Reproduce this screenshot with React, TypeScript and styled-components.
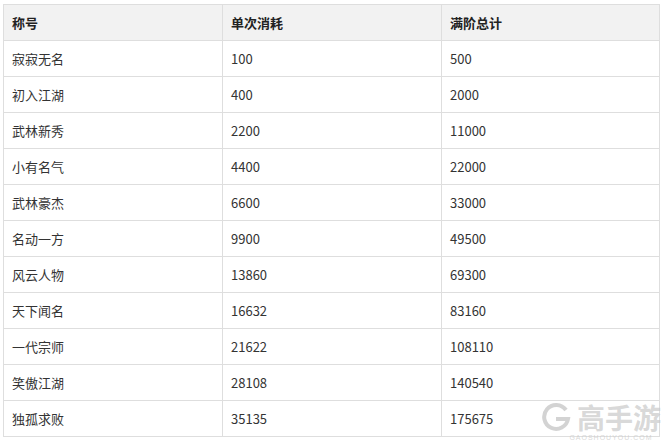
import React from "react";
import styled, { createGlobalStyle } from "styled-components";

const Global = createGlobalStyle`
  body { margin: 0; background: #fff; font-family: "Microsoft YaHei", "Noto Sans CJK SC", sans-serif; }
`;

const Wrap = styled.div`
  position: relative;
  width: 665px;
  height: 445px;
  padding: 4px 5px 0 3px;
  box-sizing: border-box;
  overflow: hidden;
`;

const Table = styled.table`
  width: 657px;
  border-collapse: collapse;
  font-size: 13px;
  color: #333;
  td, th { border: 1px solid #dedede; height: 36px; padding: 0 0 0 8px; text-align: left; box-sizing: border-box; }
  th { background: #f2f2f2; font-weight: bold; color: #222; }
  col:nth-child(1) { width: 219px; }
  col:nth-child(2) { width: 219px; }
`;

const Mark = styled.div`
  position: absolute;
  right: 4px;
  bottom: 3px;
  color: rgba(200, 200, 200, 0.7);
  text-align: center;
  line-height: 1;
  display: flex;
  flex-direction: column;
  gap: 2px;
`;
const MarkTop = styled.div`
  font-size: 28px;
  font-weight: bold;
  display: flex;
  align-items: center;
  gap: 6px;
  line-height: 30px;
`;
const MarkSub = styled.div`
  font-size: 7px;
  line-height: 8px;
  font-family: "Liberation Sans", sans-serif;
  letter-spacing: 1px;
  padding-left: 20px;
`;

const rows: [string, string, string][] = [
  ["寂寂无名", "100", "500"],
  ["初入江湖", "400", "2000"],
  ["武林新秀", "2200", "11000"],
  ["小有名气", "4400", "22000"],
  ["武林豪杰", "6600", "33000"],
  ["名动一方", "9900", "49500"],
  ["风云人物", "13860", "69300"],
  ["天下闻名", "16632", "83160"],
  ["一代宗师", "21622", "108110"],
  ["笑傲江湖", "28108", "140540"],
  ["独孤求败", "35135", "175675"],
];

export default function App() {
  return (
    <Wrap>
      <Global />
      <Table>
        <colgroup><col /><col /><col /></colgroup>
        <thead>
          <tr><th>称号</th><th>单次消耗</th><th>满阶总计</th></tr>
        </thead>
        <tbody>
          {rows.map((r) => (
            <tr key={r[0]}><td>{r[0]}</td><td>{r[1]}</td><td>{r[2]}</td></tr>
          ))}
        </tbody>
      </Table>
      <Mark>
        <MarkTop>
          <svg width="30" height="30" viewBox="0 0 30 30">
            <path d="M25 8 A12 12 0 1 0 27 17 H15" fill="none" stroke="rgba(200,200,200,0.8)" strokeWidth="4" />
          </svg>
          高手游
        </MarkTop>
        <MarkSub>GAOSHOUYOU.COM</MarkSub>
      </Mark>
    </Wrap>
  );
}
